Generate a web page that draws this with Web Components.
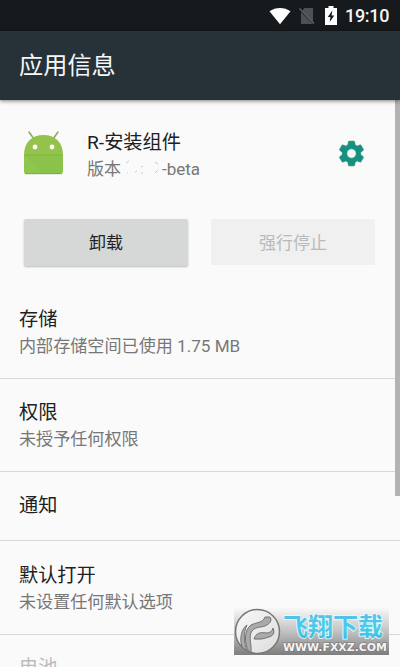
<!DOCTYPE html>
<html lang="zh-CN">
<head>
<meta charset="utf-8">
<title>应用信息</title>
<style>
html,body{margin:0;height:667px;overflow:hidden;background:#fafafa}
body{font-family:Roboto,"Noto Sans CJK SC",sans-serif}
</style>
</head>
<body>
<app-screen></app-screen>
<script>
const define = (name, html) => {
  const t = document.createElement('template');
  t.innerHTML = html;
  customElements.define(name, class extends HTMLElement {
    constructor() {
      super();
      this.attachShadow({mode: 'open'}).appendChild(t.content.cloneNode(true));
    }
  });
};

define('status-bar', `
<style>
:host{display:flex;height:31px;background:#161a1d;align-items:center;justify-content:flex-end;color:#f4f4f4;box-sizing:border-box;padding-right:11px}
svg{display:block;flex:none}
.wifi{margin-right:8px}.sim{margin-right:10px}.bat{margin-right:8px}
span{font-size:18px;line-height:30px;font-weight:500;width:44px;white-space:nowrap;letter-spacing:-.3px}
</style>
<svg class="wifi" width="22" height="18" viewBox="0 0 22 18"><path d="M.5 4.3C6.500-.2 15.500-.2 21.500 4.300L11 17.300Z" fill="#fff"/></svg>
<svg class="sim" width="16" height="18" viewBox="0 0 16 18"><path d="M5.500 1H14V15.500L4 5V2.500ZM2 5L14 17H2Z" fill="#4d5153"/><path d="M.5 1.500L15 16.500" stroke="#5c6062" stroke-width="1.500"/></svg>
<svg class="bat" width="12" height="19" viewBox="0 0 12 19"><path d="M3.500 0H8.500V2H12V19H0V2H3.500Z" fill="#fff"/><path d="M7.300 4.500L2.800 11H5.400L4.700 16L9.300 9.400H6.600Z" fill="#161a1d"/></svg>
<span>19:10</span>`);

define('app-toolbar', `
<style>
:host{display:flex;height:69px;align-items:center;background:#263238;color:#f5f7f8;padding:1px 0 0 19px;font-size:24.2px;line-height:36px;box-shadow:0 1px 4px rgba(0,0,0,.5);position:relative;box-sizing:border-box}
</style><slot></slot>`);

define('app-summary', `
<style>
:host{display:flex;height:118px;box-sizing:border-box;padding:29px 35px 0 23px;align-items:flex-start}
.robot{margin-top:1px;flex:none}
.copy{margin-left:22px;flex:1;white-space:nowrap}
.name{font-size:19.2px;line-height:26px;color:#202020;padding-top:1px}
.version{font-size:17px;line-height:26px;color:#777;display:flex}
.erased{width:41px;height:27px}
.gear{margin-top:11px;flex:none}
</style>
<svg class="robot" width="42" height="45" viewBox="0 0 42 45">
<path d="M6 2L11 9M35 2L30 9" stroke="#8ba76b" stroke-width="1.500" stroke-linecap="round"/>
<path d="M1 25C1 12 9 5 20.500 5S40 12 40 25Z" fill="#94c34b"/>
<path d="M1 25H40V41Q40 44 37 44H4Q1 44 1 41Z" fill="#8bc34a"/>
<path d="M1 25L20 44H4Q1 44 1 41Z" fill="#8fc64c"/>
<path d="M1 25H40" stroke="#7eac46" stroke-width=".7"/><path d="M2 43.700H39" stroke="#7a9d4c" stroke-width=".8"/>
<circle cx="12" cy="17" r="2.400" fill="#fff"/><circle cx="29" cy="17" r="2.400" fill="#fff"/></svg>
<div class="copy"><div class="name">R-安装组件</div><div class="version"><span>版本</span>
<svg class="erased" viewBox="0 0 41 27"><path d="M5 7L8 5M6 17H7M14 16L16 15M20 11L22 10M20 17H22M34 6L37 8M34 17L37 14" stroke="#bbb" stroke-width=".8"/></svg><span>-beta</span></div></div>
<svg class="gear" width="27" height="27" viewBox="1 1 22 22"><path fill="#17907f" stroke="#17907f" stroke-width=".7" d="M19.430 12.980c.04-.32.070-.64.070-.98s-.03-.66-.07-.98l2.110-1.650c.19-.15.240-.42.120-.64l-2-3.460c-.12-.22-.39-.3-.61-.22l-2.490 1c-.52-.4-1.080-.73-1.690-.98l-.38-2.650C14.460 2.180 14.250 2 14 2h-4c-.25 0-.46.180-.49.420l-.38 2.650c-.61.250-1.170.590-1.690.980l-2.490-1c-.23-.09-.49 0-.61.220l-2 3.460c-.13.220-.07.490.120.640l2.110 1.650c-.04.320-.07.650-.07.980s.030.660.070.980l-2.110 1.650c-.19.150-.24.420-.12.640l2 3.460c.12.220.390.300.610.220l2.490-1c.52.400 1.080.730 1.690.980l.38 2.650c.03.240.240.420.490.420h4c.25 0 .46-.18.490-.42l.38-2.650c.61-.25 1.170-.59 1.690-.98l2.490 1c.23.090.490 0 .61-.22l2-3.460c.12-.22.070-.49-.12-.64zM12 15.900a3.900 3.900 0 1 1 0-7.800 3.900 3.900 0 0 1 0 7.800z"/></svg>`);

define('action-button', `
<style>
:host{display:flex;flex:1;align-items:center;justify-content:center;height:47px;box-sizing:border-box;padding-bottom:2px;border-radius:2px;background:#d6d7d7;color:#222;font-size:17px;box-shadow:0 1px 2px rgba(0,0,0,.25)}
:host([disabled]){height:46px;padding-bottom:1px;background:#f0f0f0;color:#b9b9b9;box-shadow:none;border-radius:1px}
</style><slot></slot>`);

define('button-row', `
<style>:host{display:flex;gap:23px;padding:0 25px 0 24px;height:67px;margin-top:1px;align-items:flex-start}</style><slot></slot>`);

define('setting-row', `
<style>
:host{display:block;height:93px;box-sizing:border-box;padding:21px 19px 0;border-bottom:1px solid #d8d8d8;white-space:nowrap}
:host([single]){height:69px}
:host([tall]){height:94px;padding-top:22px}
:host([faded]){border:0;height:33px;padding-top:20px}
:host([faded]) .note{display:none}
.title{font-size:19.2px;line-height:26px;color:#202020}
:host([faded]) .title{color:#bcbcbc}
.note{font-size:17.1px;line-height:27px;color:#777}
</style><div class="title"><slot></slot></div><div class="note"><slot name="note"></slot></div>`);

define('site-badge', `
<style>:host{display:block;position:absolute;left:234px;top:608px;width:155px;height:47px}svg{display:block}</style>
<svg width="155" height="47" viewBox="0 0 155 47">
<defs><linearGradient id="bg" x2="0" y2="1"><stop stop-color="#f8f8f8"/><stop offset=".5" stop-color="#c2c2c2"/><stop offset="1" stop-color="#7d7d7d"/></linearGradient>
<linearGradient id="blue" x2="0" y2="1"><stop stop-color="#58b9e5"/><stop offset=".6" stop-color="#4ccce9"/><stop offset="1" stop-color="#38b5df"/></linearGradient>
<linearGradient id="disc" x2="1" y2="1"><stop stop-color="#f8f8f8"/><stop offset="1" stop-color="#ddd"/></linearGradient></defs>
<rect width="155" height="47" fill="url(#bg)"/>
<circle cx="23.500" cy="23.500" r="22" fill="url(#disc)" stroke="#777" stroke-width="1.500"/>
<g fill="#aaa" stroke="#737373" stroke-width="1" stroke-linejoin="round">
<path d="M15 44C10 35 10 22 17 17C23 14 29 15 31 9L36 9Q39 13 33 17C28 20 22 18 18 23C14 28 18 38 17 44Z"/>
<path d="M20 31C22 25 26 24 32 25Q38 25 39 20Q42 27 35 29Q28 32 20 31Z"/>
<path d="M8 39C5 30 8 20 13 17C9 25 10 34 13 43Z"/></g>
<text x="49" y="28" textLength="100" lengthAdjust="spacingAndGlyphs" font-family="Noto Sans CJK SC,sans-serif" font-size="25" font-weight="700" fill="url(#blue)" stroke="#e8faff" stroke-width="1.600" paint-order="stroke">飞翔下载</text>
<text x="49" y="43" textLength="104" lengthAdjust="spacingAndGlyphs" font-family="DejaVu Sans,sans-serif" font-weight="700" font-size="10" fill="#f4f4f4" stroke="#777" stroke-width="1.200" paint-order="stroke">WWW.FXXZ.COM</text>
</svg>`);

define('app-screen', `
<style>
:host{display:block;position:relative;width:400px;height:667px;overflow:hidden;background:#fafafa}
.scroll{position:absolute;right:0;top:100px;width:5px;height:396px;background:#b3b3b3}
</style>
<status-bar></status-bar><div class="scroll"></div><app-toolbar>应用信息</app-toolbar>
<app-summary></app-summary>
<button-row><action-button>卸载</action-button><action-button disabled>强行停止</action-button></button-row>
<setting-row>存储<span slot="note">内部存储空间已使用 1.75 MB</span></setting-row>
<setting-row>权限<span slot="note">未授予任何权限</span></setting-row>
<setting-row single>通知</setting-row>
<setting-row tall>默认打开<span slot="note">未设置任何默认选项</span></setting-row>
<setting-row faded>电池</setting-row>
<site-badge></site-badge>`);
</script>
</body>
</html>
